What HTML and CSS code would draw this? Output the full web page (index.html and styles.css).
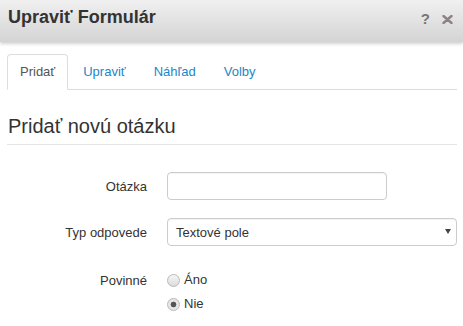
FILE: index.html
```html
<!DOCTYPE html>
<html lang="sk">
<head>
  <meta charset="UTF-8">
  <title>Upraviť Formulár</title>
  <link rel="stylesheet" href="styles.css">
</head>
<body>

  <div class="dialog-head">
    <h1 class="dialog-title">Upraviť Formulár</h1>
    <div class="dialog-tools">
      <span class="help">?</span>
      <svg class="close" width="11" height="9" viewBox="0 0 11 9">
        <path d="M1.5 1 L9.5 8 M9.5 1 L1.5 8" stroke="#8c8282" stroke-width="2.4" stroke-linecap="round"/>
      </svg>
    </div>
  </div>

  <div class="content">
    <div class="tabs">
      <a href="#" class="active">Pridať</a>
      <a href="#">Upraviť</a>
      <a href="#">Náhľad</a>
      <a href="#">Volby</a>
    </div>

    <h2 class="legend">Pridať novú otázku</h2>

    <div class="form">
      <label class="label" for="q">Otázka</label>
      <input type="text" id="q" class="field field-short">

      <label class="label" for="typ">Typ odpovede</label>
      <div class="select-wrap">
        <select id="typ" class="field">
          <option>Textové pole</option>
        </select>
      </div>

      <span class="label label-top">Povinné</span>
      <div class="radios">
        <label class="radio"><input type="radio" name="req"> Áno</label>
        <label class="radio"><input type="radio" name="req" checked> Nie</label>
      </div>
    </div>
  </div>

</body>
</html>
```

FILE: styles.css
```css
* { box-sizing: border-box; }
body {
  margin: 0;
  font-family: 'Liberation Sans', Arial, sans-serif;
  font-size: 13px;
  color: #333;
  background: #fff;
}
.dialog-head {
  height: 42px;
  padding: 6px 10px 0 8px;
  display: flex;
  justify-content: space-between;
  align-items: flex-start;
  background: linear-gradient(#f0f0f0, #d4d4d4);
  box-shadow: 0 2px 3px rgba(0,0,0,.18);
}
.dialog-title {
  margin: 0;
  font-size: 18px;
  line-height: 22px;
  font-weight: 700;
  color: #333;
}
.dialog-tools {
  margin-top: 5px;
  display: flex;
  align-items: flex-start;
  gap: 12px;
}
.help {
  font-weight: 700;
  font-size: 15px;
  line-height: 15px;
  color: #777;
}
.close { margin-top: 4px; }

.content {
  padding: 0 6px 0 7px;
}
.tabs {
  margin-top: 12px;
  display: flex;
  border-bottom: 1px solid #ddd;
}
.tabs a {
  padding: 9px 12px 10px;
  line-height: 15px;
  margin-right: 2px;
  margin-bottom: -1px;
  border: 1px solid transparent;
  border-radius: 4px 4px 0 0;
  color: #1a87c9;
  text-decoration: none;
}
.tabs a.active {
  color: #555;
  border-color: #ddd;
  border-bottom-color: #fff;
  background: #fff;
}
.legend {
  margin: 25px 0 0;
  padding: 0 0 7px 1px;
  font-size: 20px;
  line-height: 22px;
  font-weight: 400;
  color: #333;
  border-bottom: 1px solid #e5e5e5;
}

.form {
  margin-top: 27px;
  display: grid;
  grid-template-columns: 140px 290px;
  column-gap: 20px;
  row-gap: 18px;
  align-items: center;
}
.label {
  text-align: right;
  color: #333;
}
.label-top {
  align-self: start;
  line-height: 18px;
  margin-top: 8px;
}
.field {
  height: 28px;
  width: 100%;
  border: 1px solid #ccc;
  border-radius: 4px;
  background: #fff;
  font: inherit;
  color: #333;
  box-shadow: inset 0 1px 1px rgba(0,0,0,.05);
}
.field-short { width: 220px; }
.select-wrap { position: relative; }
.select-wrap select {
  appearance: none;
  -webkit-appearance: none;
  padding: 0 8px;
}
.select-wrap::after {
  content: "";
  position: absolute;
  right: 6px;
  top: 11px;
  border-left: 3px solid transparent;
  border-right: 3px solid transparent;
  border-top: 5px solid #444;
  pointer-events: none;
}
.radios {
  margin-top: 7px;
  display: flex;
  flex-direction: column;
  gap: 6px;
}
.radio {
  display: flex;
  align-items: center;
  gap: 4px;
  line-height: 18px;
}
.radio input {
  appearance: none;
  -webkit-appearance: none;
  margin: 0;
  width: 13px;
  height: 13px;
  border: 1px solid #b9b9b9;
  border-radius: 50%;
  background: linear-gradient(#f5f5f5, #dcdcdc);
}
.radio input:checked {
  background: radial-gradient(circle, #555 0 2.5px, #e6e6e6 3.2px);
}
```
